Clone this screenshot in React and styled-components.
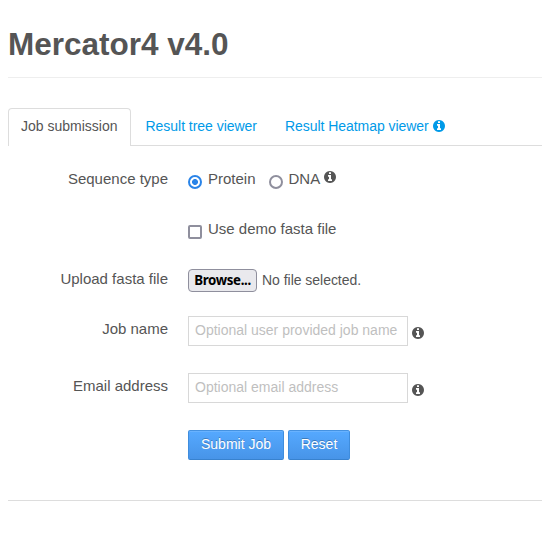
import React from "react";
import styled, { createGlobalStyle } from "styled-components";

const GlobalStyle = createGlobalStyle`
  * { box-sizing: border-box; }
  body {
    margin: 0;
    background: #fff;
    color: #555;
    font: 14px/20px "Liberation Sans", Arial, sans-serif;
  }
`;

const Page = styled.main`
  height: 542px;
  padding: 24px 0 0 8px;
  overflow: hidden;
`;

const Title = styled.h1`
  height: 54px;
  margin: 0 0 30px;
  border-bottom: 1px solid #eee;
  font-size: 31.5px;
  line-height: 40px;
`;

const Tabs = styled.nav`
  display: flex;
  height: 38px;
  border-bottom: 1px solid #ddd;
`;

const Tab = styled.a`
  display: flex;
  align-items: center;
  height: ${(p) => (p.$active ? 38 : 37)}px;
  margin-right: 2px;
  padding: 0 12px ${(p) => (p.$active ? 3 : 2)}px;
  border: 1px solid ${(p) => (p.$active ? "#ddd" : "transparent")};
  border-bottom: 0;
  border-radius: 4px 4px 0 0;
  background: #fff;
  color: ${(p) => (p.$active ? "#555" : "#009ae8")};
  letter-spacing: ${(p) => p.$spacing || 0}px;
  white-space: nowrap;
`;

const InfoSvg = styled.svg`
  flex: none;
  width: 12px;
  height: 12px;
  margin: ${(p) => p.$m || "0 0 0 4px"};
  fill: currentColor;
`;

function Info({ m }) {
  return (
    <InfoSvg $m={m} viewBox="128 128 1536 1536" aria-hidden="true">
      <path d="M1152 1376v-160q0-14-9-23t-23-9h-96v-512q0-14-9-23t-23-9h-320q-14 0-23 9t-9 23v160q0 14 9 23t23 9h96v320h-96q-14 0-23 9t-9 23v160q0 14 9 23t23 9h448q14 0 23-9t9-23zm-128-896v-160q0-14-9-23t-23-9h-192q-14 0-23 9t-9 23v160q0 14 9 23t23 9h192q14 0 23-9t9-23zm640 416q0 209-103 385.5t-279.5 279.5-385.5 103-385.5-103-279.5-279.5-103-385.5 103-385.5 279.5-279.5 385.5-103 385.5 103 279.5 279.5 103 385.5z" />
    </InfoSvg>
  );
}

const Form = styled.form`
  height: 355px;
  padding-top: 23px;
  border-bottom: 1px solid #ddd;
`;

const Row = styled.div`
  display: grid;
  grid-template-columns: 160px 1fr;
  column-gap: 20px;
  height: ${(p) => p.$h}px;
`;

const Label = styled.label`
  margin-top: ${(p) => p.$top || 0}px;
  font-size: 15px;
  line-height: 20px;
  text-align: right;
`;

const Controls = styled.div`
  display: flex;
  align-items: flex-start;
`;

const Choice = styled.label`
  display: flex;
  margin-right: ${(p) => p.$gap || 0}px;
  font-size: 15px;
`;

const Toggle = styled.input`
  appearance: none;
  flex: none;
  width: 14px;
  height: 14px;
  margin: 6px 6px 0 0;
  border: 2px solid #8f8f9d;
  border-radius: ${(p) => (p.type === "radio" ? "50%" : "2px")};
  background: #fff;

  &[type="radio"]:checked {
    border-color: #2a84e8;
    background: radial-gradient(circle, #2a84e8 2.6px, #fff 3.3px);
  }
`;

const Browse = styled.button`
  width: 69px;
  height: 23px;
  margin: 0 5px 0 0;
  padding: 0;
  border: 1px solid #8f8f9d;
  border-radius: 4px;
  background: #e9e9ed;
  color: #000;
  font: 700 13.3px/19px "Noto Sans", sans-serif;
  letter-spacing: -0.35px;
`;

const FileName = styled.span`
  line-height: 22px;
  letter-spacing: -0.03px;
`;

const Field = styled.input`
  width: 220px;
  height: 30px;
  padding: 3px 6px 5px;
  border: 1px solid #d8d8d8;
  border-radius: 0;
  background: #fff;
  color: #555;
  font: inherit;

  &::placeholder { color: #bfbfbf; opacity: 1; }
`;

const Button = styled.button`
  width: ${(p) => p.$w}px;
  height: 30px;
  margin-right: 4px;
  padding: 0 0 2px;
  border: 1px solid;
  border-color: #4592e1 #3f8ddd #3882cf;
  border-radius: 2px;
  background: linear-gradient(#55a9ff, #4794e8);
  box-shadow: inset 0 1px 0 rgba(255, 255, 255, 0.12);
  color: #fff;
  font: inherit;
  text-shadow: 0 -1px 0 rgba(0, 0, 0, 0.25);
`;

export default function App() {
  return (
    <>
      <GlobalStyle />
      <Page>
        <Title>Mercator4 v4.0</Title>
        <Tabs>
          <Tab $active>Job submission</Tab>
          <Tab $spacing={-0.03}>Result tree viewer</Tab>
          <Tab $spacing={-0.05}>Result Heatmap viewer<Info /></Tab>
        </Tabs>
        <Form>
          <Row $h={50}>
            <Label>Sequence type</Label>
            <Controls>
              <Choice $gap={13}><Toggle type="radio" name="sequence" defaultChecked />Protein</Choice>
              <Choice><Toggle type="radio" name="sequence" />DNA</Choice>
              <Info m="2px 0 0 4px" />
            </Controls>
          </Row>
          <Row $h={50}>
            <span />
            <Controls>
              <Choice><Toggle type="checkbox" />Use demo fasta file</Choice>
            </Controls>
          </Row>
          <Row $h={47}>
            <Label>Upload fasta file</Label>
            <Controls>
              <Browse type="button">Browse...</Browse>
              <FileName>No file selected.</FileName>
            </Controls>
          </Row>
          <Row $h={57}>
            <Label $top={3}>Job name</Label>
            <Controls>
              <Field placeholder="Optional user provided job name" />
              <Info m="11px 0 0 4px" />
            </Controls>
          </Row>
          <Row $h={57}>
            <Label $top={3}>Email address</Label>
            <Controls>
              <Field placeholder="Optional email address" />
              <Info m="11px 0 0 4px" />
            </Controls>
          </Row>
          <Row $h={30}>
            <span />
            <Controls>
              <Button type="button" $w={96}>Submit Job</Button>
              <Button type="reset" $w={62}>Reset</Button>
            </Controls>
          </Row>
        </Form>
      </Page>
    </>
  );
}
